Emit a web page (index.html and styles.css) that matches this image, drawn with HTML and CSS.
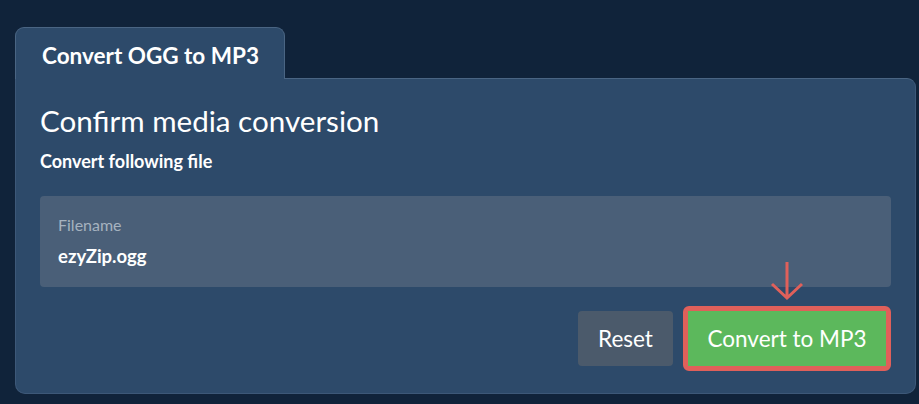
FILE: index.html
```html
<!DOCTYPE html>
<html lang="en">
<head>
    <meta charset="UTF-8">
    <meta name="viewport" content="width=device-width, initial-scale=1.0">
    <title>Convert OGG to MP3</title>
    <link rel="stylesheet" href="styles.css">
</head>
<body>

    <div class="converter">
        <div class="tabs">
            <div class="tab">Convert OGG to MP3</div>
        </div>

        <div class="panel">
            <h2>Confirm media conversion</h2>
            <p class="subtitle">Convert following file</p>

            <div class="file-box">
                <div class="file-label">Filename</div>
                <div class="file-name">ezyZip.ogg</div>
            </div>

            <div class="actions">
                <button class="btn btn-reset">Reset</button>
                <span class="highlight">
                    <svg class="pointer" width="36" height="42" viewBox="0 0 36 42">
                        <path d="M18 2 V38 M3 24 L18 38 L33 24" fill="none" stroke="#e0605a" stroke-width="3"/>
                    </svg>
                    <button class="btn btn-convert">Convert to MP3</button>
                </span>
            </div>
        </div>
    </div>

</body>
</html>
```

FILE: styles.css
```css
body {
    margin: 0;
    background-color: #10233a;
    font-family: Lato, "Open Sans", sans-serif;
    color: #fff;
}

.converter {
    width: 901px;
    margin: 27px 0 0 15px;
}

.tabs {
    display: flex;
}

.tab {
    width: 270px;
    height: 52px;
    box-sizing: border-box;
    padding: 14px 0 0 26px;
    background: #2d4a6a;
    border: 1px solid #4a6583;
    border-bottom: none;
    border-radius: 9px 9px 0 0;
    font-size: 22.5px;
    font-weight: bold;
    margin-bottom: -1px;
    position: relative;
}

.panel {
    height: 316px;
    box-sizing: border-box;
    padding: 25px 24px 0 24px;
    background: #2d4a6a;
    border: 1px solid #3d5878;
    border-top-color: #4a6583;
    border-radius: 0 9px 10px 10px;
}

h2 {
    margin: 0;
    font-size: 29.6px;
    font-weight: normal;
    line-height: 34px;
}

.subtitle {
    margin: 12px 0 0 0;
    font-size: 18px;
    font-weight: bold;
    line-height: 22px;
}

.file-box {
    margin-top: 24px;
    height: 91px;
    box-sizing: border-box;
    padding: 19px 18px;
    background: #4a5f78;
    border-radius: 4px;
}

.file-label {
    font-size: 16px;
    color: #a6b2bf;
    line-height: 20px;
}

.file-name {
    margin-top: 9px;
    font-size: 18.5px;
    font-weight: bold;
    line-height: 24px;
}

.actions {
    display: flex;
    justify-content: flex-end;
    align-items: center;
    margin-top: 19px;
    gap: 10px;
}

.btn {
    border: none;
    border-radius: 4px;
    height: 55px;
    font-family: Lato, "Open Sans", sans-serif;
    font-size: 22.5px;
    color: #fff;
}

.btn-reset {
    width: 95px;
    background: #4b5a6b;
}

.highlight {
    position: relative;
    display: flex;
    border: 5px solid #e0605a;
    border-radius: 6px;
}

.btn-convert {
    width: 198px;
    background: #5cb85c;
    border-radius: 0;
}

.pointer {
    position: absolute;
    left: 81px;
    top: -51px;
}
```
